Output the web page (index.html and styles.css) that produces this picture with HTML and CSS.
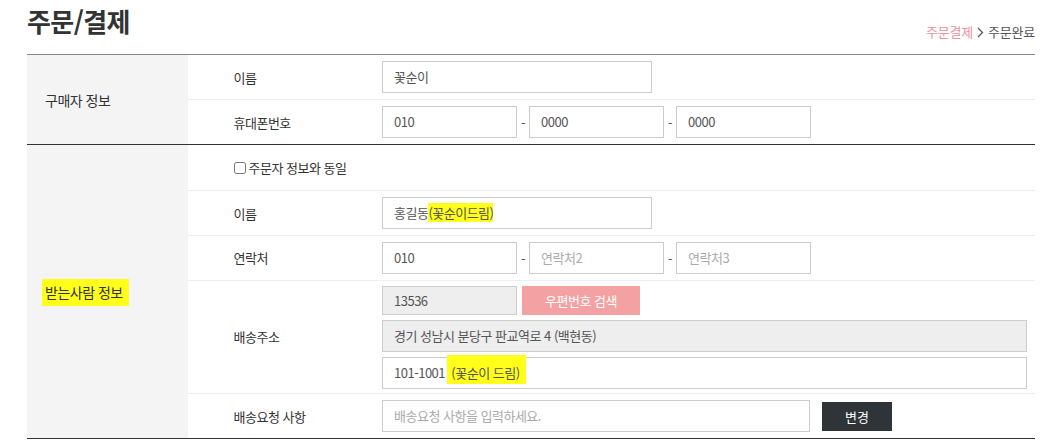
FILE: index.html
```
<!DOCTYPE html>
<html lang="ko">
<head>
    <meta charset="UTF-8">
    <meta name="viewport" content="width=device-width, initial-scale=1.0">
    <title>주문/결제</title>
    <link rel="stylesheet" href="styles.css">
</head>
<body>
    <div class="wrap">
        <div class="page-head">
            <h1>주문/결제</h1>
            <div class="crumb">
                <span class="on">주문결제</span>
                <svg class="arr" width="7" height="11" viewBox="0 0 7 11"><path d="M1 1l4.5 4.5L1 10" fill="none" stroke="#555" stroke-width="1.3"/></svg>
                <span>주문완료</span>
            </div>
        </div>
        <table class="order-table">
            <tbody class="sec">
                <tr>
                    <th rowspan="2">구매자 정보</th>
                    <td class="label">이름</td>
                    <td class="field"><div class="input w-name">꽃순이</div></td>
                </tr>
                <tr>
                    <td class="label">휴대폰번호</td>
                    <td class="field">
                        <div class="tel">
                            <div class="input w-tel">010</div><span class="dash">-</span>
                            <div class="input w-tel">0000</div><span class="dash">-</span>
                            <div class="input w-tel">0000</div>
                        </div>
                    </td>
                </tr>
            </tbody>
            <tbody class="sec">
                <tr>
                    <th rowspan="6"><span class="mark">받는사람 정보</span></th>
                    <td class="label check" colspan="2">
                        <label class="same"><input type="checkbox"> 주문자 정보와 동일</label>
                    </td>
                </tr>
                <tr>
                    <td class="label">이름</td>
                    <td class="field"><div class="input w-name">홍길동<span class="hl">(꽃순이드림)</span></div></td>
                </tr>
                <tr>
                    <td class="label">연락처</td>
                    <td class="field">
                        <div class="tel">
                            <div class="input w-tel">010</div><span class="dash">-</span>
                            <div class="input w-tel ph">연락처2</div><span class="dash">-</span>
                            <div class="input w-tel ph">연락처3</div>
                        </div>
                    </td>
                </tr>
                <tr>
                    <td class="label">배송주소</td>
                    <td class="field addr">
                        <div class="zip-row">
                            <div class="input w-tel gray zip">13536</div>
                            <button class="btn-zip" type="button">우편번호 검색</button>
                        </div>
                        <div class="input w-full gray">경기 성남시 분당구 판교역로 4 (백현동)</div>
                        <div class="input w-full">101-1001 &nbsp;<span class="hl hl-big">(꽃순이 드림)</span></div>
                    </td>
                </tr>
                <tr>
                    <td class="label">배송요청 사항</td>
                    <td class="field">
                        <div class="req">
                            <div class="input w-req ph">배송요청 사항을 입력하세요.</div>
                            <button class="btn-dark" type="button">변경</button>
                        </div>
                    </td>
                </tr>
            </tbody>
        </table>
    </div>
</body>
</html>
```

FILE: styles.css
```
body {
    margin: 0;
    font-family: "Noto Sans CJK KR", "Noto Sans", sans-serif;
    color: #333;
    background-color: #fff;
}
.wrap {
    width: 1008px;
    margin-left: 27px;
}
.page-head {
    display: flex;
    justify-content: space-between;
    height: 54px;
}
.page-head h1 {
    margin: 6px 0 0;
    font-size: 26px;
    line-height: 30px;
    font-weight: 700;
    letter-spacing: -0.6px;
    color: #333;
}
.crumb {
    align-self: flex-end;
    display: flex;
    align-items: center;
    gap: 4px;
    padding-bottom: 13px;
    font-size: 13px;
    line-height: 18px;
    letter-spacing: -0.2px;
    color: #555;
}
.crumb .on {
    color: #e8959a;
}
.order-table {
    width: 100%;
    border-collapse: collapse;
    border-top: 1px solid #888;
    font-size: 13px;
    letter-spacing: -0.5px;
}
.order-table .sec {
    border-bottom: 1px solid #333;
}
.order-table tr + tr td {
    border-top: 1px solid #eee;
}
.order-table th {
    width: 143px;
    padding: 0 0 0 18px;
    background-color: #f4f4f4;
    text-align: left;
    font-size: 14px;
    font-weight: normal;
    color: #333;
}
.mark {
    background-color: #ffff1a;
    padding: 3px 6px 4px 3px;
    margin-left: -3px;
}
.label {
    width: 148px;
    padding-left: 46px;
    color: #333;
}
.check {
    height: 43px;
}
.same {
    display: flex;
    align-items: center;
    gap: 3px;
}
.same input {
    width: 12px;
    height: 12px;
    margin: 0;
}
.field {
    padding: 6px 8px 6px 0;
}
.input {
    box-sizing: border-box;
    height: 32px;
    padding: 0 11px;
    border: 1px solid #ccc;
    background-color: #fff;
    color: #555;
    line-height: 30px;
    white-space: nowrap;
}
.ph {
    color: #aaa;
}
.gray {
    background-color: #eee;
}
.w-name {
    width: 270px;
}
.w-tel {
    width: 135px;
}
.w-full {
    width: 645px;
}
.w-req {
    width: 428px;
}
.tel {
    display: flex;
    align-items: center;
}
.dash {
    width: 12px;
    text-align: center;
    color: #555;
}
.hl {
    background-color: #ffff1a;
}
.hl-big {
    padding: 8px 6px 2px 4px;
    margin-left: -4px;
}
.addr {
    display: flex;
    flex-direction: column;
    gap: 5px;
    padding-top: 5px;
    padding-bottom: 4px;
}
.zip-row {
    display: flex;
    gap: 5px;
}
.zip {
    height: 29px;
    line-height: 27px;
}
.btn-zip {
    width: 118px;
    height: 29px;
    border: none;
    background-color: #f4a1a4;
    color: #fff;
    font-family: inherit;
    font-size: 13px;
    letter-spacing: -0.5px;
}
.req {
    display: flex;
    align-items: center;
    gap: 12px;
}
.btn-dark {
    width: 70px;
    height: 29px;
    border: none;
    background-color: #2f3439;
    color: #fff;
    font-family: inherit;
    font-size: 13px;
}
```
